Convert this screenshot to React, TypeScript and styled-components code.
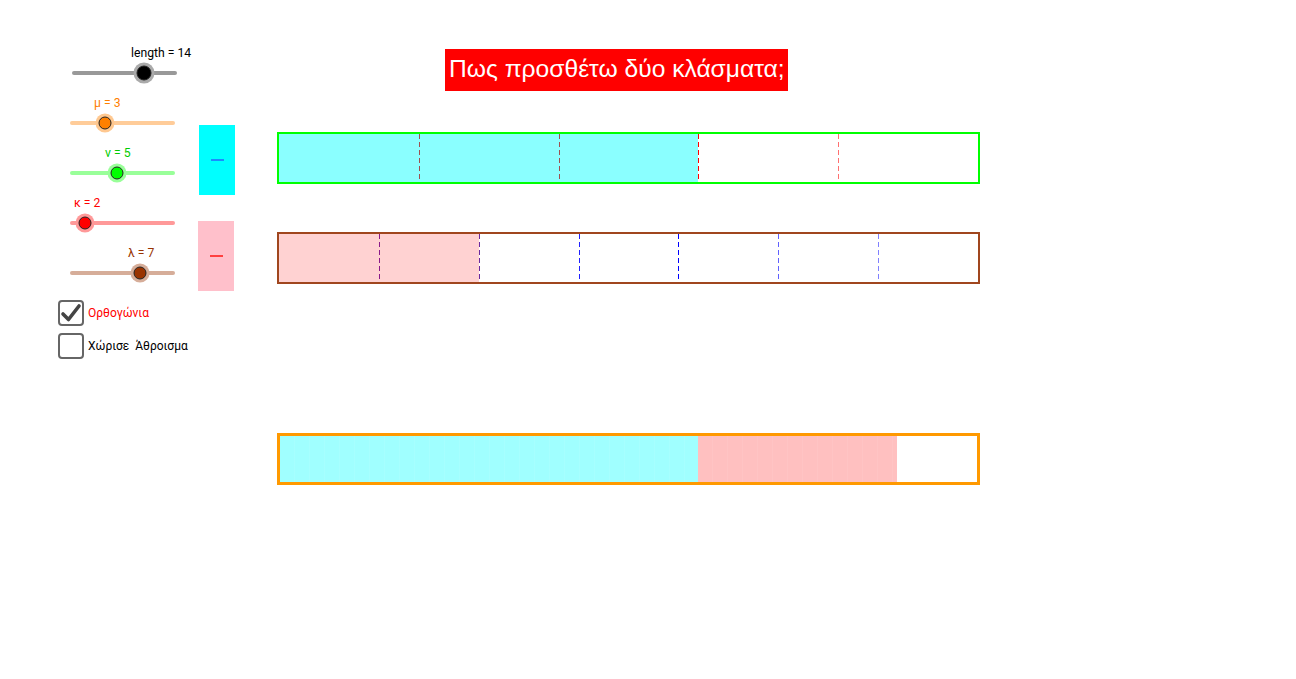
import React from 'react';
import styled, { createGlobalStyle } from 'styled-components';

const GlobalStyle = createGlobalStyle`
  html, body {
    margin: 0;
    padding: 0;
    background: #ffffff;
  }
  body {
    font-family: Roboto, 'Liberation Sans', sans-serif;
  }
`;

const Stage = styled.div`
  width: 1296px;
  height: 679px;
  display: flex;
  flex-direction: row;
  align-items: flex-start;
  background: #ffffff;
  overflow: hidden;
`;

const Controls = styled.div`
  width: 198px;
  padding-top: 45px;
  display: flex;
  flex-direction: column;
`;

const SliderBlock = styled.div`
  height: 50px;
  display: flex;
  flex-direction: column;
`;

const SliderLabel = styled.div<{ $x: number; $color: string }>`
  height: 16px;
  line-height: 16px;
  margin-left: ${(p) => p.$x}px;
  font-size: 12.2px;
  color: ${(p) => p.$color};
  white-space: nowrap;
`;

const TrackArea = styled.div<{ $x: number }>`
  position: relative;
  margin-left: ${(p) => p.$x}px;
  width: 105px;
  height: 24px;
  display: flex;
  align-items: center;
`;

const Track = styled.div<{ $color: string }>`
  width: 100%;
  height: 4px;
  border-radius: 2px;
  background: ${(p) => p.$color};
`;

const Knob = styled.div<{ $fill: string; $halo: string; $size: number }>`
  position: absolute;
  top: 50%;
  width: ${(p) => p.$size}px;
  height: ${(p) => p.$size}px;
  border-radius: 50%;
  background: ${(p) => p.$fill};
  border: 1px solid #222222;
  box-sizing: border-box;
  transform: translate(-50%, -50%);
  box-shadow: 0 0 0 3px ${(p) => p.$halo};
`;

const CheckList = styled.div`
  margin-top: 5px;
  display: flex;
  flex-direction: column;
  gap: 7px;
`;

const CheckRow = styled.div`
  display: flex;
  align-items: center;
  gap: 4px;
  margin-left: 58px;
  height: 26px;
`;

const Box = styled.div`
  width: 26px;
  height: 26px;
  box-sizing: border-box;
  border: 2px solid #666666;
  border-radius: 4px;
  display: flex;
  align-items: center;
  justify-content: center;
  background: #ffffff;
`;

const CheckText = styled.span<{ $color: string }>`
  font-size: 12px;
  color: ${(p) => p.$color};
  white-space: pre;
`;

const Swatches = styled.div`
  width: 37px;
  padding-top: 125px;
  display: flex;
  flex-direction: column;
  gap: 26px;
`;

const Swatch = styled.div<{ $bg: string; $shift: number }>`
  width: 36px;
  height: 70px;
  margin-left: ${(p) => p.$shift}px;
  background: ${(p) => p.$bg};
  display: flex;
  align-items: center;
  justify-content: center;
`;

const Dash = styled.div<{ $color: string }>`
  width: 13px;
  height: 2px;
  background: ${(p) => p.$color};
`;

const Main = styled.div`
  margin-left: 42px;
  padding-top: 49px;
  display: flex;
  flex-direction: column;
`;

const TitleRow = styled.div`
  padding-left: 168px;
  display: flex;
`;

const Title = styled.div`
  height: 42px;
  padding: 0 3px 0 4px;
  background: #ff0000;
  color: #ffffff;
  font-family: 'Liberation Sans', Arial, sans-serif;
  font-size: 24.6px;
  line-height: 40px;
  white-space: nowrap;
`;

const Bar = styled.div<{ $border: string; $bw: number; $gap: number }>`
  width: 703px;
  height: 52px;
  box-sizing: border-box;
  margin-top: ${(p) => p.$gap}px;
  border: ${(p) => p.$bw}px solid ${(p) => p.$border};
  display: flex;
  background: #ffffff;
`;

const Segment = styled.div<{ $fill: string; $divider?: string }>`
  flex: 1;
  background-color: ${(p) => p.$fill};
  background-image: ${(p) =>
    p.$divider
      ? `repeating-linear-gradient(to bottom, ${p.$divider} 0px, ${p.$divider} 5px, transparent 5px, transparent 8px)`
      : 'none'};
  background-size: 1px 100%;
  background-repeat: no-repeat;
  background-position: left top;
`;

const SumPart = styled.div<{ $fill: string; $grow: number }>`
  flex: ${(p) => p.$grow};
  background-color: ${(p) => p.$fill};
  background-image: repeating-linear-gradient(
    90deg,
    transparent 0px,
    transparent 14px,
    rgba(255, 255, 255, 0.07) 14px,
    rgba(255, 255, 255, 0.07) 15px
  );
`;

type SliderProps = {
  label: string;
  labelX: number;
  trackX: number;
  value: number;
  min: number;
  max: number;
  color: string;
  track: string;
  fill: string;
  halo: string;
  size?: number;
};

const Slider = ({ label, labelX, trackX, value, min, max, color, track, fill, halo, size = 13 }: SliderProps) => {
  const pct = ((value - min) / (max - min)) * 100;
  return (
    <SliderBlock>
      <SliderLabel $x={labelX} $color={color}>
        {label}
      </SliderLabel>
      <TrackArea $x={trackX}>
        <Track $color={track} />
        <Knob $fill={fill} $halo={halo} $size={size} style={{ left: `${pct}%` }} />
      </TrackArea>
    </SliderBlock>
  );
};

type FractionBarProps = {
  parts: number;
  filled: number;
  fill: string;
  border: string;
  gap: number;
  dividers: string[];
};

const FractionBar = ({ parts, filled, fill, border, gap, dividers }: FractionBarProps) => (
  <Bar $border={border} $bw={2} $gap={gap}>
    {Array.from({ length: parts }).map((_, i) => (
      <Segment key={i} $fill={i < filled ? fill : '#ffffff'} $divider={i > 0 ? dividers[i - 1] : undefined} />
    ))}
  </Bar>
);

export default function App() {
  return (
    <>
      <GlobalStyle />
      <Stage>
        <Controls>
          <Slider label="length = 14" labelX={131} trackX={72} value={14} min={1} max={20} color="#000000" track="#999999" fill="#000000" halo="#aaaaaa" size={15} />
          <Slider label="μ = 3" labelX={94} trackX={70} value={3} min={1} max={7} color="#ff8000" track="#ffcc99" fill="#ff8000" halo="#ffc890" />
          <Slider label="ν = 5" labelX={105} trackX={70} value={5} min={1} max={10} color="#00cc00" track="#99ff99" fill="#00ff00" halo="#99ff99" />
          <Slider label="κ = 2" labelX={74} trackX={70} value={2} min={1} max={8} color="#ff0000" track="#ff9999" fill="#ff0000" halo="#ff9999" />
          <Slider label="λ = 7" labelX={128} trackX={70} value={7} min={1} max={10} color="#993300" track="#d6ad99" fill="#993300" halo="#d6ad99" />
          <CheckList>
            <CheckRow>
              <Box>
                <svg width="22" height="22" viewBox="0 0 22 22">
                  <path d="M3 12 L8.5 17.5 L19 4" fill="none" stroke="#444444" strokeWidth="3.6" strokeLinecap="round" strokeLinejoin="round" />
                </svg>
              </Box>
              <CheckText $color="#ff0000">Ορθογώνια</CheckText>
            </CheckRow>
            <CheckRow>
              <Box />
              <CheckText $color="#000000">Χώρισε  Άθροισμα</CheckText>
            </CheckRow>
          </CheckList>
        </Controls>
        <Swatches>
          <Swatch $bg="#00ffff" $shift={1}>
            <Dash $color="#1a8cff" />
          </Swatch>
          <Swatch $bg="#ffc0cb" $shift={0}>
            <Dash $color="#ff4040" />
          </Swatch>
        </Swatches>
        <Main>
          <TitleRow>
            <Title>Πως προσθέτω δύο κλάσματα;</Title>
          </TitleRow>
          <FractionBar
            parts={5}
            filled={3}
            fill="#8affff"
            border="#00ff00"
            gap={41}
            dividers={['#a05050', '#a05050', '#ff0000', '#ff7070']}
          />
          <FractionBar
            parts={7}
            filled={2}
            fill="#ffd2d2"
            border="#a0461e"
            gap={48}
            dividers={['#8a1a8a', '#6a2aa0', '#2020ff', '#0000ff', '#6060ff', '#8080ff']}
          />
          <Bar $border="#ff9900" $bw={3} $gap={149}>
            <SumPart $fill="#a0ffff" $grow={21} />
            <SumPart $fill="#ffc0c0" $grow={10} />
            <SumPart $fill="#ffffff" $grow={4} />
          </Bar>
        </Main>
      </Stage>
    </>
  );
}
